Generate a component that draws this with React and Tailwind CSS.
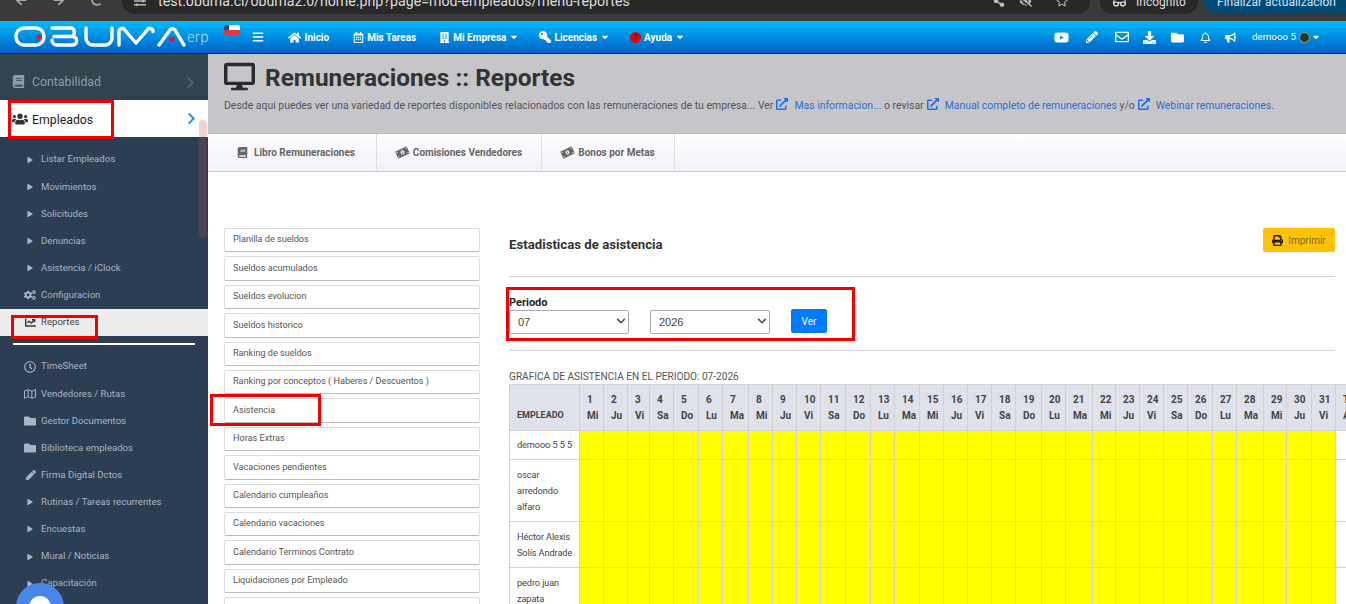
import {
  FaArrowLeft, FaArrowRight, FaBars, FaBook, FaBuilding, FaBullhorn, FaCaretDown, FaChartLine, FaChevronDown,
  FaChevronRight, FaCogs, FaDesktop, FaDownload, FaEyeSlash, FaExternalLinkAlt, FaFolder, FaGlasses, FaHome, FaKey,
  FaMoneyBillAlt, FaPencilAlt, FaPen, FaPlay, FaPrint, FaRedo, FaRegBell, FaRegCalendarAlt, FaRegClock,
  FaRegEnvelope, FaRegMap, FaRegStar, FaSlidersH, FaShareAlt, FaUsers, FaYoutube,
} from "react-icons/fa";

const widths = [24, 24, 22, 24, 25, 24, 26, 24, 24, 24, 25, 25, 24, 25, 24, 24, 24, 24, 26, 24, 27, 23, 24, 24, 24, 25, 24, 27, 23, 25, 24];
const dayNames = ["Mi", "Ju", "Vi", "Sa", "Do", "Lu", "Ma"];

const reports = [
  "Planilla de sueldos", "Sueldos acumulados", "Sueldos evolucion", "Sueldos historico", "Ranking de sueldos",
  "Ranking por conceptos ( Haberes / Descuentos )", "Asistencia", "Horas Extras", "Vacaciones pendientes",
  "Calendario cumpleaños", "Calendario vacaciones", "Calendario Terminos Contrato", "Liquidaciones por Empleado", "",
];

const employees = [
  { name: ["demooo 5 5 5"], h: "h-[29px]" },
  { name: ["oscar", "arredondo", "alfaro"], h: "h-[62px]" },
  { name: ["Héctor Alexis", "Solís Andrade"], h: "h-[46px]" },
  { name: ["pedro juan", "zapata"], h: "h-[46px]" },
];

function Logo() {
  return (
    <svg width="172" height="24" viewBox="0 0 172 24" fill="none" stroke="white" strokeWidth="3.4" strokeLinecap="round" strokeLinejoin="round">
      <rect x="2" y="3" width="28" height="17" rx="8" />
      <circle cx="25" cy="12" r="2.6" fill="#e8112d" stroke="none" />
      <path d="M38 3H58a5 5 0 0 1 0 8.5H40M40 11.5H59a4.3 4.3 0 0 1 0 8.5H43a5 5 0 0 1-5-5" />
      <path d="M72 3V13a7 7 0 0 0 7 7H91a7 7 0 0 0 7-7V3" />
      <path d="M105 20V6.5a3 3 0 0 1 5.5-1.8L122 18l11.5-13.3a3 3 0 0 1 5.5 1.8" />
      <path d="M145 20L156 5a3 3 0 0 1 5 0L170 20" />
      <circle cx="158" cy="14" r="2.6" fill="#e8112d" stroke="none" />
    </svg>
  );
}

function NavLink({ icon, label, caret, className }) {
  return (
    <div className={"flex items-center gap-[3px] text-[10px] font-bold text-white " + className}>
      {icon}
      <span>{label}</span>
      {caret && <FaCaretDown className="text-[10px]" />}
    </div>
  );
}

function SideItem({ icon, label, active }) {
  return (
    <div className={"flex h-[27.15px] items-center text-[9.6px] " + (active ? "bg-[#ececec] text-[#444]" : "text-[#a9b4c2]")}>
      <span className="flex w-[41px] shrink-0 justify-end pr-[5px]">{icon}</span>
      <span>{label}</span>
    </div>
  );
}

const arrow = <FaPlay className="mr-[3px] text-[6px]" />;
const link = <FaExternalLinkAlt className="ml-[3px] mr-[6px] inline align-[-1px] text-[12px] text-[#1a73e8]" />;

function Sidebar() {
  return (
    <aside className="w-[208px] shrink-0 overflow-hidden bg-[#2b3e53]">
      <div className="flex h-[46px] items-end justify-between bg-gradient-to-b from-[#344750] to-[#2f414f] pb-[9px] pl-[12px] pr-[11px] text-[#8f9ba6]">
        <div className="flex items-center gap-[7px] text-[12.3px]">
          <FaBook className="text-[13px]" />
          <span>Contabilidad</span>
        </div>
        <FaChevronRight className="mb-[2px] text-[13px] text-[#55656f]" />
      </div>
      <div className="flex h-[37px] items-center justify-between bg-white pl-[12px] pr-[10px] text-[#222]">
        <div className="flex items-center gap-[4px] text-[12.3px]">
          <FaUsers className="text-[16px] text-[#333]" />
          <span className="mt-[3px]">Empleados</span>
        </div>
        <FaChevronRight className="text-[13px] text-[#2f8be6]" />
      </div>
      <div className="pt-[9px]">
        <SideItem icon={arrow} label="Listar Empleados" />
        <SideItem icon={arrow} label="Movimientos" />
        <SideItem icon={arrow} label="Solicitudes" />
        <SideItem icon={arrow} label="Denuncias" />
        <SideItem icon={arrow} label="Asistencia / iClock" />
        <SideItem icon={<FaCogs className="text-[12px]" />} label="Configuracion" />
        <SideItem icon={<FaChartLine className="text-[11px] text-[#333]" />} label="Reportes" active />
        <div className="mx-[13px] mb-[8px] mt-[7px] h-[2px] w-[182px] bg-white" />
        <SideItem icon={<FaRegClock className="text-[12px]" />} label="TimeSheet" />
        <SideItem icon={<FaRegMap className="text-[12px]" />} label="Vendedores / Rutas" />
        <SideItem icon={<FaFolder className="text-[12px]" />} label="Gestor Documentos" />
        <SideItem icon={<FaFolder className="text-[12px]" />} label="Biblioteca empleados" />
        <SideItem icon={<FaPen className="text-[10px]" />} label="Firma Digital Dctos" />
        <SideItem icon={arrow} label="Rutinas / Tareas recurrentes" />
        <SideItem icon={arrow} label="Encuestas" />
        <SideItem icon={arrow} label="Mural / Noticias" />
        <SideItem icon={arrow} label="Capacitación" />
      </div>
    </aside>
  );
}

function AttendanceTable() {
  return (
    <div className="w-[837px] overflow-hidden">
      <table className="table-fixed border-collapse text-[10px] text-[#444]" style={{ width: 70 + widths.reduce((a, b) => a + b, 0) + 40 }}>
        <colgroup>
          <col style={{ width: 70 }} />
          {widths.map((w, i) => <col key={i} style={{ width: w }} />)}
          <col style={{ width: 40 }} />
        </colgroup>
        <thead>
          <tr className="h-[46px] bg-[#dfe2ea] font-bold">
            <th className="border border-[#d2d2d2] px-[7px] pt-[17px] text-left text-[9px] font-bold">EMPLEADO</th>
            {widths.map((w, i) => (
              <th key={i} className="border border-[#d2d2d2] px-[7px] text-left align-top text-[10px] font-bold leading-[16px]">
                <div className="pt-[7px]">{i + 1}</div>
                <div>{dayNames[i % 7]}</div>
              </th>
            ))}
            <th className="border border-[#d2d2d2] px-[7px] text-left align-top text-[10px] font-bold leading-[16px]">
              <div className="pt-[7px]">T</div>
              <div>A</div>
            </th>
          </tr>
        </thead>
        <tbody>
          {employees.map((emp) => (
            <tr key={emp.name[0]} className={emp.h}>
              <td className="border border-[#d2d2d2] bg-white px-[7px] text-[9.2px] leading-[16px] tracking-[-0.1px]">
                {emp.name.map((n) => <div key={n} className="whitespace-nowrap">{n}</div>)}
              </td>
              {widths.map((w, i) => <td key={i} className="border border-[#d2d2d2] bg-[#ffff00]" />)}
              <td className="border border-[#d2d2d2] bg-white" />
            </tr>
          ))}
        </tbody>
      </table>
    </div>
  );
}

function PeriodSelect({ value, className }) {
  return (
    <div className={"relative h-[24px] w-[120px] " + className}>
      <select
        defaultValue={value}
        className="h-full w-full appearance-none rounded-[2px] border border-[#a9a9b4] bg-white pl-[8px] font-['Liberation_Sans'] text-[11px] text-[#444]"
      >
        <option>{value}</option>
      </select>
      <FaChevronDown className="absolute right-[3px] top-[7px] text-[10px] text-[#555]" />
    </div>
  );
}

export default function App() {
  return (
    <div className="relative flex h-[604px] w-[1346px] flex-col overflow-hidden bg-white font-['Roboto',sans-serif]">
      {/* browser chrome */}
      <div className="flex h-[21px] shrink-0 items-start overflow-hidden bg-[#3a3a3a] text-white">
        <div className="-mt-[6px] flex w-[122px] gap-[26px] pl-[15px] text-[12px] text-[#aaa]">
          <FaArrowLeft />
          <FaArrowRight />
          <FaRedo />
        </div>
        <div className="-mt-[11px] flex h-[25px] w-[968px] items-center justify-between rounded-full bg-[#282828] pl-[12px] pr-[22px] text-[14.2px] text-[#ddd]">
          <div className="flex items-center gap-[12px]">
            <FaSlidersH className="text-[12px] text-[#bbb]" />
            <span>test.obuma.cl/obuma2.0/home.php?page=mod-empleados/menu-reportes</span>
          </div>
          <div className="flex gap-[14px] text-[#bbb]">
            <FaShareAlt className="text-[12px]" />
            <FaEyeSlash className="text-[13px]" />
            <FaRegStar className="ml-[10px] text-[12px]" />
          </div>
        </div>
        <div className="-mt-[11px] ml-[10px] flex h-[25px] w-[98px] items-center gap-[10px] rounded-full bg-[#282828] pl-[13px] text-[12px] text-[#ddd]">
          <FaGlasses className="text-[13px]" /> Incógnito
        </div>
        <div className="-mt-[11px] ml-[6px] flex h-[25px] flex-1 items-center rounded-l-full bg-[#004a77] pl-[13px] text-[12px] text-[#cfe6f5]">Finalizar actualización</div>
      </div>

      {/* navbar */}
      <nav className="flex h-[33px] shrink-0 items-center border-b border-[#1c2b3a] bg-gradient-to-b from-[#00baf7] to-[#0060c9] text-white">
        <div className="ml-[14px] flex items-center">
          <Logo />
          <span className="ml-[1px] font-['Open_Sans'] text-[14px] font-light leading-none text-[#cde6fa]">erp</span>
        </div>
        <div className="relative -top-[7px] ml-[16px] h-[10px] w-[16px] overflow-hidden rounded-[2px] bg-[#e23744]">
          <div className="h-[5px] bg-white" />
          <div className="absolute left-0 top-0 h-[5px] w-[5px] bg-[#1c4fa1]" />
        </div>
        <FaBars className="ml-[12px] text-[12px]" />
        <NavLink className="ml-[24px]" icon={<FaHome className="text-[13px]" />} label="Inicio" />
        <NavLink className="ml-[24px]" icon={<FaRegCalendarAlt className="text-[11px]" />} label="Mis Tareas" />
        <NavLink className="ml-[23px]" icon={<FaBuilding className="text-[11px]" />} label="Mi Empresa" caret />
        <NavLink className="ml-[20px]" icon={<FaKey className="-scale-x-100 text-[12px]" />} label="Licencias" caret />
        <NavLink
          className="ml-[20px]"
          icon={<span className="flex h-[11px] w-[11px] items-center justify-center rounded-full bg-[#ee0000] text-[8px] font-bold text-[#400]">?</span>}
          label="Ayuda"
          caret
        />
        <div className="ml-auto flex items-center pr-[25px]">
          <FaYoutube className="text-[15px]" />
          <FaPencilAlt className="ml-[17px] text-[12px]" />
          <FaRegEnvelope className="ml-[17px] text-[14px]" />
          <FaDownload className="ml-[14px] text-[13px]" />
          <FaFolder className="ml-[15px] text-[13px]" />
          <FaRegBell className="ml-[16px] text-[11px]" />
          <FaBullhorn className="ml-[14px] text-[11px]" />
          <span className="ml-[16px] text-[9.8px]">demooo 5</span>
          <span className="ml-[3px] h-[11px] w-[11px] rounded-full border border-[#b97] bg-[#1d3a2c]" />
          <FaCaretDown className="ml-[1px] text-[10px]" />
        </div>
      </nav>

      <div className="flex min-h-0 flex-1">
        <Sidebar />
        <main className="min-w-0 flex-1">
          <header className="h-[80px] border-b border-[#b9b9c0] bg-[#c6c6ca] pl-[16px] pt-[7px]">
            <div className="flex items-start">
              <FaDesktop className="text-[31px] text-[#2b2b2b]" />
              <h1 className="ml-[10px] pt-[1px] text-[24.4px] font-bold leading-[32px] text-[#333]">Remuneraciones :: Reportes</h1>
            </div>
            <p className="mt-[4px] text-[10.45px] leading-[16px] text-[#555]">
              Desde aqui puedes ver una variedad de reportes disponibles relacionados con las remuneraciones de tu empresa... Ver
              {link}<span className="text-[#2a6fd6]">Mas informacion...</span> o revisar
              {link}<span className="text-[#2a6fd6]">Manual completo de remuneraciones</span> y/o
              {link}<span className="text-[#2a6fd6]">Webinar remuneraciones</span>.
            </p>
          </header>

          <div className="flex h-[38px] border-b border-[#cfcfd7] bg-gradient-to-b from-white to-[#f0f0f7] text-[10px] font-bold text-[#666]">
            <div className="flex w-[169px] items-center justify-center gap-[6px] border-r border-[#dedee4] pl-[8px]">
              <FaBook className="text-[11px]" /> Libro Remuneraciones
            </div>
            <div className="flex w-[165px] items-center justify-center gap-[4px] border-r border-[#dedee4]">
              <FaMoneyBillAlt className="-rotate-[25deg] text-[13px]" /> Comisiones Vendedores
            </div>
            <div className="flex w-[133px] items-center justify-center gap-[4px] border-r border-[#dedee4]">
              <FaMoneyBillAlt className="-rotate-[25deg] text-[13px]" /> Bonos por Metas
            </div>
          </div>

          <div className="flex pl-[16px] pt-[56px]">
            <div className="w-[256px] shrink-0">
              {reports.map((r, i) => (
                <div
                  key={i}
                  className="mb-[4px] flex h-[24.42px] items-center rounded-[2px] border border-[#dcdcdc] border-b-[#bbb] pl-[8px] text-[9.1px] text-[#555]"
                >
                  {r}
                </div>
              ))}
            </div>

            <section className="ml-[29px] min-w-0 flex-1">
              <div className="mr-[11px]">
                <div className="flex h-[24px] items-center justify-between">
                  <h2 className="pt-[9px] text-[13.2px] font-bold text-[#333]">Estadisticas de asistencia</h2>
                  <button className="flex h-[24px] w-[72px] items-center justify-center gap-[5px] rounded-[2px] bg-[#ffc107] text-[10px] text-[#7a6a20]">
                    <FaPrint className="text-[11px] text-[#222]" /> Imprimir
                  </button>
                </div>
                <div className="mt-[24px] h-px bg-[#d3d3d3]" />
                <div className="h-[73px] pt-[19px]">
                  <div className="text-[11px] font-bold leading-[13px] text-[#222]">Periodo</div>
                  <div className="flex items-center">
                    <PeriodSelect value="07" />
                    <PeriodSelect value="2026" className="ml-[21px]" />
                    <button className="ml-[21px] h-[24px] w-[36px] rounded-[2px] bg-[#007bff] text-[10px] text-white">Ver</button>
                  </div>
                </div>
                <div className="h-px bg-[#d3d3d3]" />
              </div>
              <div className="mt-[18px] text-[10.1px] leading-[15px] text-[#555]">GRAFICA DE ASISTENCIA EN EL PERIODO: 07-2026</div>
              <AttendanceTable />
            </section>
          </div>
        </main>
      </div>

      {/* annotation boxes and overlays */}
      <div className="absolute left-[8px] top-[100px] h-[39px] w-[106px] border-[3px] border-[#f00000]" />
      <div className="absolute left-[11px] top-[315px] h-[24px] w-[87px] border-[3px] border-[#f00000]" />
      <div className="absolute left-[210px] top-[394px] h-[32px] w-[111px] border-[3px] border-[#f00000]" />
      <div className="absolute left-[506px] top-[287px] h-[54px] w-[349px] border-[3px] border-[#f00000]" />
      <div className="absolute left-[199px] top-[120px] h-[118px] w-[8px] rounded-full bg-[#c05060]/25" />
      <div className="absolute left-[16px] top-[583px] flex h-[48px] w-[48px] justify-center rounded-full bg-[#4a86e8] pt-[13px]">
        <div className="h-[22px] w-[22px] rounded-full bg-white" />
      </div>
    </div>
  );
}
